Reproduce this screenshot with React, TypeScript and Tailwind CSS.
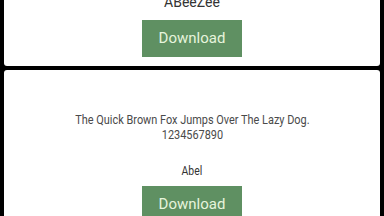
const buttonClass =
  'flex h-[37px] w-[100px] items-center justify-center bg-[#5f9062] text-[15px] text-[#e6f4dc]';

const condensed = { fontFamily: 'Roboto, sans-serif' };

function DownloadButton() {
  return (
    <button type="button" className={buttonClass} style={{ fontFamily: 'Roboto, sans-serif' }}>
      Download
    </button>
  );
}

export default function App() {
  return (
    <div className="h-[216px] w-[384px] overflow-hidden bg-black px-1">
      <div className="-mt-[12px] flex flex-col gap-1">
        {/* ABeeZee card, scrolled mostly out of view */}
        <div className="flex flex-col items-center rounded-[3px] bg-white pt-[5px] pb-[9px]">
          <p
            className="text-[14px] leading-[18px] text-[#333]"
            style={{ fontFamily: 'Roboto, sans-serif' }}
          >
            ABeeZee
          </p>
          <div className="mt-[9px]">
            <DownloadButton />
          </div>
        </div>

        {/* Abel card */}
        <div className="flex h-[160px] flex-col items-center rounded-[3px] bg-white pt-[42px]">
          <div
            className="scale-x-[0.84] text-center text-[13px] leading-[15px] whitespace-nowrap text-[#4a4a4a]"
            style={condensed}
          >
            <p>The Quick Brown Fox Jumps Over The Lazy Dog.</p>
            <p>1234567890</p>
          </div>
          <p className="mt-[21px] scale-x-[0.8] text-[13px] leading-[16px] text-[#333]" style={condensed}>
            Abel
          </p>
          <div className="mt-[7px]">
            <DownloadButton />
          </div>
        </div>
      </div>
    </div>
  );
}
